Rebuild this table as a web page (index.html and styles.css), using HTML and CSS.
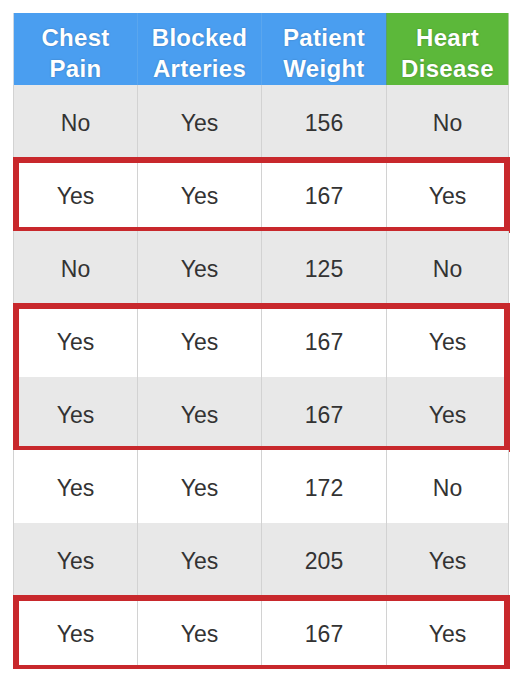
FILE: index.html
```html
<!DOCTYPE html>
<html>
<head>
<meta charset="utf-8">
<link rel="stylesheet" href="styles.css">
</head>
<body>
<div class="table">
  <div class="row head">
    <div class="cell">Chest<br>Pain</div>
    <div class="cell">Blocked<br>Arteries</div>
    <div class="cell">Patient<br>Weight</div>
    <div class="cell green">Heart<br>Disease</div>
  </div>
  <div class="group">
    <div class="row gray"><div class="cell">No</div><div class="cell">Yes</div><div class="cell">156</div><div class="cell">No</div></div>
  </div>
  <div class="group box">
    <div class="row"><div class="cell">Yes</div><div class="cell">Yes</div><div class="cell">167</div><div class="cell">Yes</div></div>
  </div>
  <div class="group">
    <div class="row gray"><div class="cell">No</div><div class="cell">Yes</div><div class="cell">125</div><div class="cell">No</div></div>
  </div>
  <div class="group box">
    <div class="row"><div class="cell">Yes</div><div class="cell">Yes</div><div class="cell">167</div><div class="cell">Yes</div></div>
    <div class="row gray"><div class="cell">Yes</div><div class="cell">Yes</div><div class="cell">167</div><div class="cell">Yes</div></div>
  </div>
  <div class="group">
    <div class="row"><div class="cell">Yes</div><div class="cell">Yes</div><div class="cell">172</div><div class="cell">No</div></div>
    <div class="row gray"><div class="cell">Yes</div><div class="cell">Yes</div><div class="cell">205</div><div class="cell">Yes</div></div>
  </div>
  <div class="group box">
    <div class="row"><div class="cell">Yes</div><div class="cell">Yes</div><div class="cell">167</div><div class="cell">Yes</div></div>
  </div>
</div>
</body>
</html>
```
FILE: styles.css
```css
html, body {
  margin: 0;
  padding: 0;
  background: #ffffff;
}
body {
  font-family: "Liberation Sans", Arial, sans-serif;
}
.table {
  margin: 13px 0 0 13px;
  width: 496px;
  display: flex;
  flex-direction: column;
}
.row {
  display: grid;
  grid-template-columns: 124px 124px 125px 123px;
  height: 73px;
  background: #ffffff;
}
.row.gray {
  background: #e8e8e8;
}
.cell {
  display: flex;
  align-items: center;
  justify-content: center;
  text-align: center;
  font-size: 23px;
  color: #333333;
  padding-top: 4px;
  border-left: 1px solid #d2d2d2;
}
.cell:last-child {
  border-right: 1px solid #d2d2d2;
}
.head {
  height: 72px;
  background: #4a9ef0;
}
.head .cell {
  color: #ffffff;
  font-weight: bold;
  font-size: 24px;
  letter-spacing: 0.3px;
  line-height: 31px;
  padding-top: 7px;
  border-left: 1px solid #5aa6ee;
  text-shadow: 0 0 2px rgba(0, 0, 0, 0.25);
}
.head .cell:first-child {
  border-left: 1px solid #c9d6e4;
}
.head .cell.green {
  background: #5cb83a;
  border-left: 1px solid #5aa06a;
  border-right: 1px solid #a9cf9a;
}
.group {
  position: relative;
}
.group.box::after {
  content: "";
  position: absolute;
  top: -1px;
  bottom: -2px;
  left: 0;
  right: -1px;
  border: 6px solid #c8282c;
  pointer-events: none;
}
```
